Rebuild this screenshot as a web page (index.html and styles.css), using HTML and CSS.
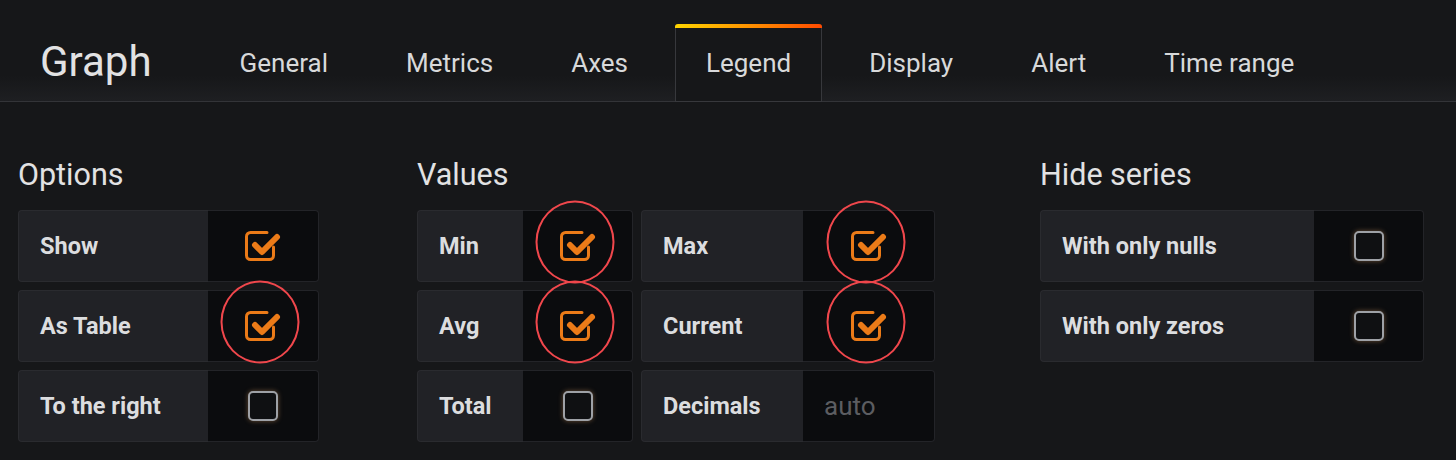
FILE: index.html
```html
<!DOCTYPE html>
<html lang="en">
  <head>
    <meta charset="UTF-8" />
    <meta name="viewport" content="width=device-width, initial-scale=1.0"/>
    <title>Graph - Legend</title>
    <link rel="stylesheet" href="styles.css">
  </head>
  <body>

    <!-- Иконка отмеченного чекбокса -->
    <svg class="defs" width="0" height="0">
      <symbol id="checked" viewBox="0 0 40 36">
        <path d="M24 4.5H7.5a4 4 0 0 0-4 4v19a4 4 0 0 0 4 4h19a4 4 0 0 0 4-4V19" fill="none" stroke="#eb7b18" stroke-width="3" stroke-linecap="round"/>
        <path d="M12 17l7 7 15-15" fill="none" stroke="#eb7b18" stroke-width="6" stroke-linecap="round" stroke-linejoin="round"/>
      </symbol>
    </svg>

    <div class="header">
      <h1 class="title">Graph</h1>
      <ul class="tabs">
        <li class="tab">General</li>
        <li class="tab">Metrics</li>
        <li class="tab">Axes</li>
        <li class="tab active">Legend</li>
        <li class="tab">Display</li>
        <li class="tab">Alert</li>
        <li class="tab">Time range</li>
      </ul>
    </div>

    <div class="content">
      <!-- Options -->
      <section class="group options">
        <h3 class="heading">Options</h3>
        <div class="row">
          <span class="label">Show</span>
          <div class="cell"><svg class="check"><use href="#checked"/></svg></div>
        </div>
        <div class="row">
          <span class="label">As Table</span>
          <div class="cell marked"><svg class="check"><use href="#checked"/></svg></div>
        </div>
        <div class="row">
          <span class="label">To the right</span>
          <div class="cell"><span class="box"></span></div>
        </div>
      </section>

      <!-- Values -->
      <section class="group values">
        <h3 class="heading">Values</h3>
        <div class="grid">
          <div class="row short">
            <span class="label">Min</span>
            <div class="cell marked"><svg class="check"><use href="#checked"/></svg></div>
          </div>
          <div class="row long">
            <span class="label">Max</span>
            <div class="cell marked"><svg class="check"><use href="#checked"/></svg></div>
          </div>
          <div class="row short">
            <span class="label">Avg</span>
            <div class="cell marked"><svg class="check"><use href="#checked"/></svg></div>
          </div>
          <div class="row long">
            <span class="label">Current</span>
            <div class="cell marked"><svg class="check"><use href="#checked"/></svg></div>
          </div>
          <div class="row short">
            <span class="label">Total</span>
            <div class="cell"><span class="box"></span></div>
          </div>
          <div class="row long">
            <span class="label">Decimals</span>
            <div class="cell field"><input type="text" placeholder="auto" /></div>
          </div>
        </div>
      </section>

      <!-- Hide series -->
      <section class="group hide">
        <h3 class="heading">Hide series</h3>
        <div class="row">
          <span class="label">With only nulls</span>
          <div class="cell"><span class="box"></span></div>
        </div>
        <div class="row">
          <span class="label">With only zeros</span>
          <div class="cell"><span class="box"></span></div>
        </div>
      </section>
    </div>

  </body>
</html>
```

FILE: styles.css
```css
* {
  box-sizing: border-box;
}

body {
  margin: 0;
  background-color: #161719;
  color: #d8d9da;
  font-family: Roboto, "Open Sans", sans-serif;
}

.defs {
  position: absolute;
  width: 0;
  height: 0;
}

/* Шапка с вкладками */
.header {
  display: flex;
  align-items: flex-end;
  height: 102px;
  padding-left: 40px;
  border-bottom: 1px solid #333438;
  background: linear-gradient(#161719 75%, #1e1f22);
}

.title {
  margin: 0 57px 14px 0;
  font-size: 42px;
  font-weight: 400;
  line-height: 50px;
  color: #e2e2e3;
}

.tabs {
  display: flex;
  gap: 16px;
  list-style: none;
  margin: 0 0 -1px;
  padding: 0;
}

.tab {
  position: relative;
  height: 78px;
  padding: 24px 30px;
  font-size: 26px;
  line-height: 30px;
  border: 1px solid transparent;
  border-top: none;
}

.tab.active {
  background-color: #161719;
  border-color: #37383c;
  border-radius: 3px 3px 0 0;
}

.tab.active::before {
  content: "";
  position: absolute;
  top: 0;
  left: -1px;
  right: -1px;
  height: 4px;
  border-radius: 3px 3px 0 0;
  background: linear-gradient(to right, #ffd500, #ff9a00 45%, #ff4a00);
}

/* Содержимое */
.content {
  display: flex;
  padding: 55px 18px 0;
}

.heading {
  margin: 0 0 17px;
  font-size: 30.5px;
  font-weight: 400;
  line-height: 36px;
  color: #e2e2e3;
}

.options {
  width: 301px;
  margin-right: 98px;
}

.values {
  width: 518px;
  margin-right: 105px;
}

.hide {
  width: 384px;
}

.grid {
  display: grid;
  grid-template-columns: 216px 294px;
  column-gap: 8px;
}

.row {
  display: flex;
  height: 72px;
  margin-bottom: 8px;
}

.label {
  display: flex;
  align-items: center;
  flex: none;
  padding-left: 21px;
  font-size: 23.5px;
  font-weight: 700;
  color: #dcdddf;
  background-color: #212226;
  border: 1px solid #2a2b2f;
  border-right: none;
  border-radius: 4px 0 0 4px;
}

.options .label { width: 190px; }
.values .short .label { width: 106px; }
.values .long .label { width: 162px; }
.hide .label { width: 274px; }

.cell {
  position: relative;
  flex: 1;
  display: flex;
  align-items: center;
  justify-content: center;
  background-color: #0b0c0e;
  border: 1px solid #232428;
  border-left: none;
  border-radius: 0 4px 4px 0;
}

.check {
  width: 40px;
  height: 36px;
}

.box {
  width: 30px;
  height: 30px;
  background-color: #0f1012;
  border: 2px solid #9ea1a6;
  border-radius: 5px;
  box-shadow: 0 0 5px rgba(214, 156, 96, 0.45);
}

/* Красные круги-пометки поверх чекбоксов */
.marked::after {
  content: "";
  position: absolute;
  left: 50%;
  top: 50%;
  width: 75px;
  height: 79px;
  border: 2.5px solid #f0474c;
  border-radius: 50%;
  transform: translate(calc(-50% - 3px), calc(-50% - 4px));
}

.field {
  justify-content: flex-start;
}

.field input {
  width: 100%;
  padding: 0 0 0 21px;
  font-family: inherit;
  font-size: 26px;
  color: #d8d9da;
  background: transparent;
  border: none;
  outline: none;
}

.field input::placeholder {
  color: #5c5d61;
}
```
